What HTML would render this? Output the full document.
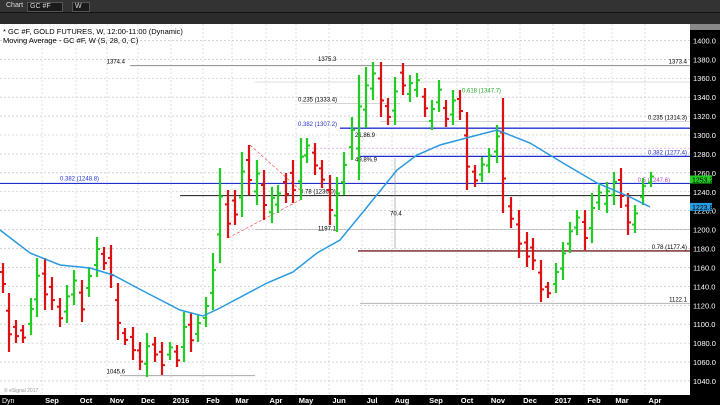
<!DOCTYPE html><html><head><style>
body{margin:0;width:720px;height:405px;overflow:hidden;background:#fff;font-family:"Liberation Sans",sans-serif}
#tb{position:absolute;left:0;top:0;width:720px;height:24px;background:#2b2b2b}
#tb1{position:absolute;top:0;left:0;width:720px;height:12px;background:#333;border-bottom:1px solid #111}
.box{position:absolute;top:2px;height:8px;background:#1a1a1a;border:1px solid #555;color:#ddd;font-size:7px;line-height:8px;padding-left:2px}
#ax{position:absolute;left:690px;top:24px;width:30px;height:381px;background:#000}
#bx{position:absolute;left:0;top:395px;width:720px;height:10px;background:#000}
</style></head><body>
<div id="tb"><div id="tb1"></div>
<div class="box" style="left:4px;width:30px;background:#333;border:none">Chart</div>
<div class="box" style="left:27px;width:32px">GC #F</div>
<div class="box" style="left:72px;width:14px">W</div>
</div>
<svg width="720" height="405" style="position:absolute;left:0;top:0" id="s"></svg>
<div id="ax"></div><div id="bx"></div>
<svg width="720" height="405" style="position:absolute;left:0;top:0" id="s2"></svg>
<script>
var s=document.getElementById('s'),s2=document.getElementById('s2'),h='',h2='';
function Y(p){return 40.4+(1400-p)*0.946}
for(var p=1040;p<=1400;p+=20){var y=Y(p);h+='<line x1="0" x2="690" y1="'+y+'" y2="'+y+'" stroke="#bbb" stroke-dasharray="2,2" stroke-width="0.6"/>';h2+='<text x="693" y="'+(y+3)+'" fill="#fff" font-size="7.5">'+p.toFixed(1)+'</text>'}
var mx=[[52,'Sep'],[86,'Oct'],[117,'Nov'],[148,'Dec'],[181,'2016'],[213,'Feb'],[242,'Mar'],[276,'Apr'],[306,'May'],[339,'Jun'],[372,'Jul'],[402,'Aug'],[436,'Sep'],[467,'Oct'],[498,'Nov'],[530,'Dec'],[563,'2017'],[594,'Feb'],[622,'Mar'],[655,'Apr']];
mx.forEach(function(m){h+='<line x1="'+(m[0]-10)+'" x2="'+(m[0]-10)+'" y1="24" y2="395" stroke="#ccc" stroke-dasharray="2,2" stroke-width="0.6"/>';h2+='<text x="'+m[0]+'" y="403" fill="#fff" font-size="7.5" font-weight="bold" text-anchor="middle">'+m[1]+'</text>'});
h2+='<text x="2" y="403" fill="#fff" font-size="7">Dyn</text>';
function L(x1,x2,p,c,w,d){h+='<line x1="'+x1+'" x2="'+x2+'" y1="'+Y(p)+'" y2="'+Y(p)+'" stroke="'+c+'" stroke-width="'+w+'"'+(d?' stroke-dasharray="2,2"':'')+'/>'}
function T(x,p,t,c,a){h+='<text x="'+x+'" y="'+(Y(p)-2)+'" fill="'+(c||'#000')+'" font-size="6" text-anchor="'+(a||'start')+'">'+t+'</text>'}
L(130,690,1373.4,'#999',1.2);T(125,1373.4,'1374.4','#000','end');T(318,1376,'1375.3');T(687,1373.4,'1373.4','#000','end');
L(255,690,1356,'#ccc',0.6);
L(300,690,1286,'#e6a0e6',0.8,1);
L(340,690,1307.2,'#2030d0',1.3);T(298,1307.2,'0.382 (1307.2)','#2030d0');
L(360,690,1277.4,'#2030d0',1.3);T(687,1277.4,'0.382 (1277.4)','#2030d0','end');
L(0,690,1248.8,'#2030d0',1.2);T(60,1250,'0.382 (1248.8)','#2030d0');
L(180,690,1236,'#333',1.2);T(300,1236,'0.78 (1236.0)');
L(358,690,1177.4,'#702020',1.4);T(687,1177.4,'0.78 (1177.4)','#000','end');
L(255,690,1200,'#aaa',0.6);
L(360,690,1122.1,'#aaa',0.8);T(687,1122.1,'1122.1','#000','end');
L(120,255,1045.6,'#aaa',1);T(125,1045.6,'1045.6','#000','end');
L(300,400,1333.4,'#aaa',0.5);T(298,1333.4,'0.235 (1333.4)');T(687,1314.3,'0.235 (1314.3)','#000','end');
L(380,690,1314.3,'#aaa',0.5);
T(318,1197.1,'1197.1');T(390,1213,'70.4');T(670,1248,'0.5 (1247.6)','#c040c0','end');
T(462,1343,'0.618 (1347.7)','#2a2');T(355,1296,'21.86.9');T(355,1270,'49.8%.9');
h+='<line x1="250" x2="300" y1="145" y2="190" stroke="#e33" stroke-dasharray="3,2" stroke-width="0.6"/>';
h+='<line x1="228" x2="300" y1="238" y2="200" stroke="#e33" stroke-dasharray="3,2" stroke-width="0.6"/>';
h+='<line x1="395" x2="395" y1="'+Y(1276)+'" y2="'+Y(1180)+'" stroke="#888" stroke-width="0.6"/>';
var B=[[3,263,293,'r'],[9,293,352,'r'],[16,320,343,'r'],[23,325,343,'r'],[31,298,335,'g'],[37,258,317,'g'],[45,258,310,'r'],[52,277,310,'r'],[60,298,327,'r'],[67,285,323,'g'],[74,270,305,'g'],[82,280,322,'r'],[89,267,297,'g'],[97,237,277,'g'],[104,247,270,'r'],[111,245,288,'r'],[118,283,340,'r'],[125,328,345,'r'],[133,327,360,'r'],[140,342,370,'r'],[147,333,377,'g'],[155,337,362,'r'],[162,342,375,'r'],[170,342,360,'g'],[177,345,367,'r'],[184,312,362,'g'],[191,313,352,'r'],[198,315,342,'g'],[206,297,327,'g'],[213,253,310,'g'],[220,168,263,'g'],[228,190,238,'r'],[235,190,225,'r'],[242,152,217,'g'],[249,145,195,'r'],[257,160,205,'g'],[264,170,220,'r'],[272,187,223,'g'],[278,185,213,'g'],[286,173,203,'r'],[293,160,203,'r'],[301,138,200,'g'],[307,138,163,'g'],[315,143,175,'r'],[322,160,188,'r'],[330,175,225,'r'],[337,177,232,'g'],[344,152,195,'g'],[352,117,160,'g'],[359,75,180,'g'],[366,67,128,'g'],[373,62,100,'g'],[381,62,117,'r'],[388,98,125,'r'],[395,77,125,'g'],[403,63,95,'r'],[410,75,102,'g'],[417,73,97,'g'],[425,88,117,'r'],[432,100,130,'g'],[439,80,112,'g'],[446,100,127,'r'],[453,90,125,'g'],[460,90,120,'r'],[467,112,190,'r'],[475,165,187,'r'],[482,157,182,'g'],[489,148,173,'g'],[497,125,163,'g'],[503,98,213,'r'],[511,197,228,'r'],[519,210,258,'r'],[527,232,267,'r'],[533,238,270,'r'],[541,260,302,'r'],[548,282,298,'r'],[556,263,293,'g'],[563,242,280,'g'],[570,222,253,'g'],[577,210,235,'g'],[585,210,250,'r'],[592,193,243,'g'],[599,185,210,'g'],[607,182,213,'g'],[614,172,205,'g'],[621,168,208,'r'],[628,193,235,'r'],[635,205,233,'g'],[643,178,205,'g'],[651,172,187,'g']];
B.forEach(function(b){var x=b[0],t=b[1],u=b[2],g=b[3]=='g',col=g?'#22cc22':'#dd1111',d=u-t,o=g?u-d*0.3:t+d*0.3,c=g?t+d*0.3:u-d*0.3;
h+='<line x1="'+x+'" x2="'+x+'" y1="'+t+'" y2="'+u+'" stroke="'+col+'" stroke-width="2.2"/>';
h+='<line x1="'+(x-3)+'" x2="'+x+'" y1="'+o+'" y2="'+o+'" stroke="'+col+'" stroke-width="2"/>';
h+='<line x1="'+x+'" x2="'+(x+3)+'" y1="'+c+'" y2="'+c+'" stroke="'+col+'" stroke-width="2"/>'});
var mp=[[0,230],[30,253],[60,265],[90,268],[113,275],[147,293],[180,310],[203,316],[220,308],[267,283],[293,272],[317,253],[340,240],[363,212],[397,170],[417,155],[440,145],[470,137],[497,130],[530,143],[563,163],[597,183],[630,197],[650,207]];
h+='<polyline fill="none" stroke="#2a9ae0" stroke-width="1.5" points="'+mp.map(function(q){return q[0]+','+q[1]}).join(' ')+'"/>';
h+='<text x="3" y="34" font-size="7.5" fill="#000">* GC #F, GOLD FUTURES, W, 12:00-11:00 (Dynamic)</text><text x="3" y="43" font-size="7.5" fill="#000">Moving Average - GC #F, W (S, 28, 0, C)</text>';
h+='<text x="4" y="392" font-size="5" fill="#999">© eSignal 2017</text>';
s.innerHTML=h;
h2+='<rect x="690" y="24" width="30" height="6" fill="#888"/><rect x="690" y="'+(Y(1253)-4)+'" width="22" height="8" fill="#22cc22"/><text x="692" y="'+(Y(1253)+3)+'" font-size="7" fill="#000">1253.2</text>';
h2+='<rect x="690" y="'+(Y(1224)-4)+'" width="22" height="8" fill="#2a9ae0"/><text x="692" y="'+(Y(1224)+3)+'" font-size="7" fill="#000">1223.8</text>';
s2.innerHTML=h2;
</script></body></html>
